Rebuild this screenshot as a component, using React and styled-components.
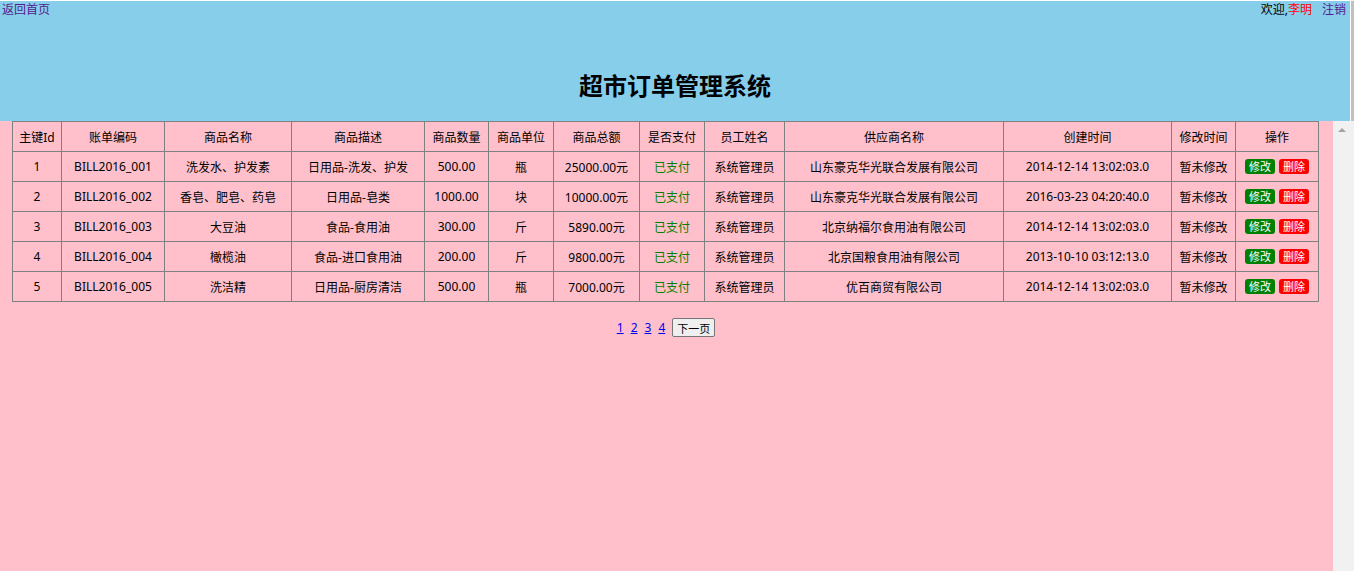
import React from 'react'
import styled, { createGlobalStyle } from 'styled-components'

const GlobalStyle = createGlobalStyle`
  html, body {
    margin: 0;
    padding: 0;
    height: 100%;
    overflow: hidden;
  }
  body {
    font-family: "Noto Sans", "Noto Sans CJK SC", sans-serif;
    font-size: 12px;
    color: #000;
  }
`

const columns = [
  { title: '主键Id', width: 49 },
  { title: '账单编码', width: 103 },
  { title: '商品名称', width: 127 },
  { title: '商品描述', width: 133 },
  { title: '商品数量', width: 64 },
  { title: '商品单位', width: 65 },
  { title: '商品总额', width: 86 },
  { title: '是否支付', width: 65 },
  { title: '员工姓名', width: 80 },
  { title: '供应商名称', width: 219 },
  { title: '创建时间', width: 168 },
  { title: '修改时间', width: 64 },
  { title: '操作', width: 83 },
]

const bills = [
  { id: 1, code: 'BILL2016_001', name: '洗发水、护发素', desc: '日用品-洗发、护发', count: '500.00', unit: '瓶', total: '25000.00元', provider: '山东豪克华光联合发展有限公司', created: '2014-12-14 13:02:03.0' },
  { id: 2, code: 'BILL2016_002', name: '香皂、肥皂、药皂', desc: '日用品-皂类', count: '1000.00', unit: '块', total: '10000.00元', provider: '山东豪克华光联合发展有限公司', created: '2016-03-23 04:20:40.0' },
  { id: 3, code: 'BILL2016_003', name: '大豆油', desc: '食品-食用油', count: '300.00', unit: '斤', total: '5890.00元', provider: '北京纳福尔食用油有限公司', created: '2014-12-14 13:02:03.0' },
  { id: 4, code: 'BILL2016_004', name: '橄榄油', desc: '食品-进口食用油', count: '200.00', unit: '斤', total: '9800.00元', provider: '北京国粮食用油有限公司', created: '2013-10-10 03:12:13.0' },
  { id: 5, code: 'BILL2016_005', name: '洗洁精', desc: '日用品-厨房清洁', count: '500.00', unit: '瓶', total: '7000.00元', provider: '优百商贸有限公司', created: '2014-12-14 13:02:03.0' },
]

function App() {
  return (
    <Page>
      <GlobalStyle />
      <Main>
        <Header>
          <TopBar>
            <NavLink href="#">返回首页</NavLink>
            <UserBox>
              欢迎,<UserName>李明</UserName>
              <NavLink href="#">注销</NavLink>
            </UserBox>
          </TopBar>
          <Title>超市订单管理系统</Title>
        </Header>
        <BodyRow>
          <Content>
            <Table>
              <colgroup>
                {columns.map((c) => (
                  <col key={c.title} style={{ width: c.width }} />
                ))}
              </colgroup>
              <thead>
                <tr>
                  {columns.map((c) => (
                    <Cell as="th" key={c.title}>{c.title}</Cell>
                  ))}
                </tr>
              </thead>
              <tbody>
                {bills.map((b) => (
                  <tr key={b.id}>
                    <Cell>{b.id}</Cell>
                    <Cell>{b.code}</Cell>
                    <Cell>{b.name}</Cell>
                    <Cell>{b.desc}</Cell>
                    <Cell>{b.count}</Cell>
                    <Cell>{b.unit}</Cell>
                    <Cell>{b.total}</Cell>
                    <Cell><Paid>已支付</Paid></Cell>
                    <Cell>系统管理员</Cell>
                    <Cell>{b.provider}</Cell>
                    <Cell>{b.created}</Cell>
                    <Cell>暂未修改</Cell>
                    <Cell>
                      <Actions>
                        <ActionButton $color="#008000">修改</ActionButton>
                        <ActionButton $color="#ff0000">删除</ActionButton>
                      </Actions>
                    </Cell>
                  </tr>
                ))}
              </tbody>
            </Table>
            <Pager>
              <PageLink href="#">1</PageLink>
              <PageLink href="#">2</PageLink>
              <PageLink href="#">3</PageLink>
              <PageLink href="#">4</PageLink>
              <NextButton>下一页</NextButton>
            </Pager>
          </Content>
          <ScrollTrack>
            <ScrollArrow />
          </ScrollTrack>
        </BodyRow>
      </Main>
      <OuterBar>
        <OuterThumb />
      </OuterBar>
    </Page>
  )
}

const Page = styled.div`
  display: flex;
  height: 571px;
  width: 1354px;
  background: #fff;
`

const Main = styled.div`
  flex: 1;
  display: flex;
  flex-direction: column;
  padding-top: 1px;
  min-width: 0;
`

const Header = styled.div`
  height: 120px;
  background: #87ceeb;
  display: flex;
  flex-direction: column;
`

const TopBar = styled.div`
  display: flex;
  justify-content: space-between;
  padding: 0 4px 0 2px;
  height: 17px;
  line-height: 17px;
  font-size: 12px;
`

const NavLink = styled.a`
  color: #551a8b;
  text-decoration: none;
`

const UserBox = styled.div`
  color: #000;

  ${NavLink} {
    margin-left: 10px;
  }
`

const UserName = styled.span`
  color: #ff0000;
`

const Title = styled.h1`
  margin: 0;
  padding-top: 52px;
  text-align: center;
  font-size: 24px;
  font-weight: bold;
  line-height: 32px;
`

const BodyRow = styled.div`
  flex: 1;
  display: flex;
`

const Content = styled.div`
  flex: 1;
  background: #ffc0cb;
  padding-left: 12px;
  padding-right: 13px;
`

const Table = styled.table`
  border-collapse: collapse;
  table-layout: fixed;
  width: 1307px;
  font-size: 12px;
`

const Cell = styled.td`
  border: 1px solid #808080;
  height: 29px;
  padding: 0;
  text-align: center;
  font-weight: normal;
  white-space: nowrap;
`

const Paid = styled.span`
  color: #008000;
`

const Actions = styled.div`
  display: flex;
  justify-content: center;
  gap: 4px;
`

const ActionButton = styled.span`
  display: inline-block;
  background: ${(p) => p.$color};
  color: #fff;
  font-size: 11px;
  line-height: 15px;
  padding: 0 4px;
  border-radius: 3px;
`

const Pager = styled.div`
  display: flex;
  justify-content: center;
  align-items: center;
  gap: 7px;
  margin-top: 16px;
  padding-left: 2px;
  padding-right: 2px;
`

const PageLink = styled.a`
  color: #0000ee;
  font-size: 12px;
`

const NextButton = styled.button`
  font-family: inherit;
  font-size: 11px;
  padding: 0 4px;
  height: 19px;
  background: #efefef;
  border: 1px solid #767676;
  border-radius: 2px;
  color: #000;
`

const ScrollTrack = styled.div`
  width: 17px;
  background: #f1f1f1;
  display: flex;
  justify-content: center;
  padding-top: 7px;
`

const ScrollArrow = styled.div`
  width: 0;
  height: 0;
  border-left: 4px solid transparent;
  border-right: 4px solid transparent;
  border-bottom: 4px solid #a3a3a3;
`

const OuterBar = styled.div`
  width: 4px;
  background: #f1f1f1;
  display: flex;
  flex-direction: column;
`

const OuterThumb = styled.div`
  height: 120px;
  margin-top: 1px;
  background: #c1c1c1;
  border-left: 1px solid #fff;
`

export default App
